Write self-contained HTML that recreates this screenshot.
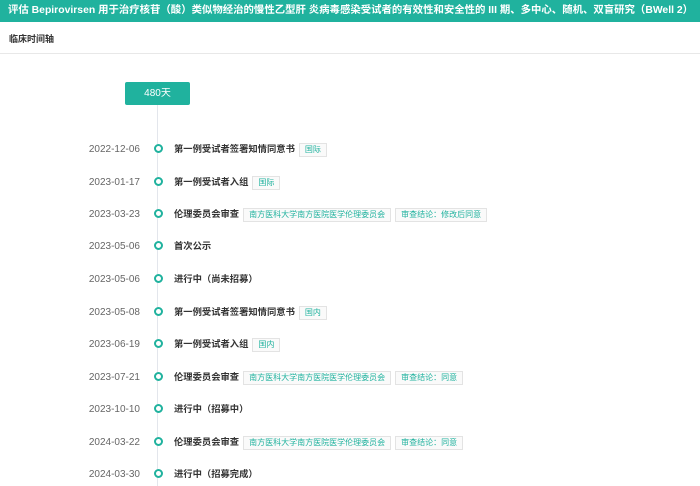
<!DOCTYPE html><html><head><meta charset="utf-8"><style>
body{margin:0;width:700px;height:486px;overflow:hidden;background:#fff;font-family:"Liberation Sans","Noto Sans CJK SC",sans-serif;}
.hd{height:22px;background:#20b29e;color:#fff;font-weight:bold;font-size:10.4px;line-height:22px;padding-left:8px;white-space:nowrap;overflow:hidden}
.sub{height:31px;border-bottom:1px solid #e8e8e8;font-size:9px;font-weight:bold;color:#333;line-height:34px;padding-left:9px}
.badge{position:absolute;left:125px;top:82px;width:65px;height:23px;background:#20b29e;color:#fff;font-size:10px;line-height:23px;text-align:center;border-radius:2px}
.line{position:absolute;left:157px;top:105px;width:1px;height:381px;background:#e3e6ec}
.row{position:absolute;left:0;height:14px;font-size:10px;line-height:14px;white-space:nowrap}
.d{position:absolute;top:2px;color:#666;width:100px;text-align:right}
.dot{position:absolute;left:154px;top:3px;width:5px;height:5px;border:2px solid #20b29e;border-radius:50%;background:#fff}
.t{position:absolute;left:174px;top:1px;color:#333;font-weight:bold;font-size:9.3px}
.tag{display:inline-block;font-weight:normal;color:#20b29e;border:1px solid #e3e3e3;background:#fafafa;font-size:8px;line-height:12px;padding:0 5px;margin-left:4px;vertical-align:0}
</style></head><body>
<div class="hd">评估 Bepirovirsen 用于治疗核苷（酸）类似物经治的慢性乙型肝 炎病毒感染受试者的有效性和安全性的 III 期、多中心、随机、双盲研究（BWell 2）</div>
<div class="sub">临床时间轴</div>
<div class="badge">480天</div>
<div class="line"></div>
<div class="row" style="top:141px"><span class="d" style="left:40px">2022-12-06</span><span class="dot"></span><span class="t">第一例受试者签署知情同意书<span class="tag">国际</span></span></div>
<div class="row" style="top:174px"><span class="d" style="left:40px">2023-01-17</span><span class="dot"></span><span class="t">第一例受试者入组<span class="tag">国际</span></span></div>
<div class="row" style="top:206px"><span class="d" style="left:40px">2023-03-23</span><span class="dot"></span><span class="t">伦理委员会审查<span class="tag">南方医科大学南方医院医学伦理委员会</span><span class="tag">审查结论：修改后同意</span></span></div>
<div class="row" style="top:238px"><span class="d" style="left:40px">2023-05-06</span><span class="dot"></span><span class="t">首次公示</span></div>
<div class="row" style="top:271px"><span class="d" style="left:40px">2023-05-06</span><span class="dot"></span><span class="t">进行中（尚未招募）</span></div>
<div class="row" style="top:304px"><span class="d" style="left:40px">2023-05-08</span><span class="dot"></span><span class="t">第一例受试者签署知情同意书<span class="tag">国内</span></span></div>
<div class="row" style="top:336px"><span class="d" style="left:40px">2023-06-19</span><span class="dot"></span><span class="t">第一例受试者入组<span class="tag">国内</span></span></div>
<div class="row" style="top:369px"><span class="d" style="left:40px">2023-07-21</span><span class="dot"></span><span class="t">伦理委员会审查<span class="tag">南方医科大学南方医院医学伦理委员会</span><span class="tag">审查结论：同意</span></span></div>
<div class="row" style="top:401px"><span class="d" style="left:40px">2023-10-10</span><span class="dot"></span><span class="t">进行中（招募中）</span></div>
<div class="row" style="top:434px"><span class="d" style="left:40px">2024-03-22</span><span class="dot"></span><span class="t">伦理委员会审查<span class="tag">南方医科大学南方医院医学伦理委员会</span><span class="tag">审查结论：同意</span></span></div>
<div class="row" style="top:466px"><span class="d" style="left:40px">2024-03-30</span><span class="dot"></span><span class="t">进行中（招募完成）</span></div>
</body></html>
